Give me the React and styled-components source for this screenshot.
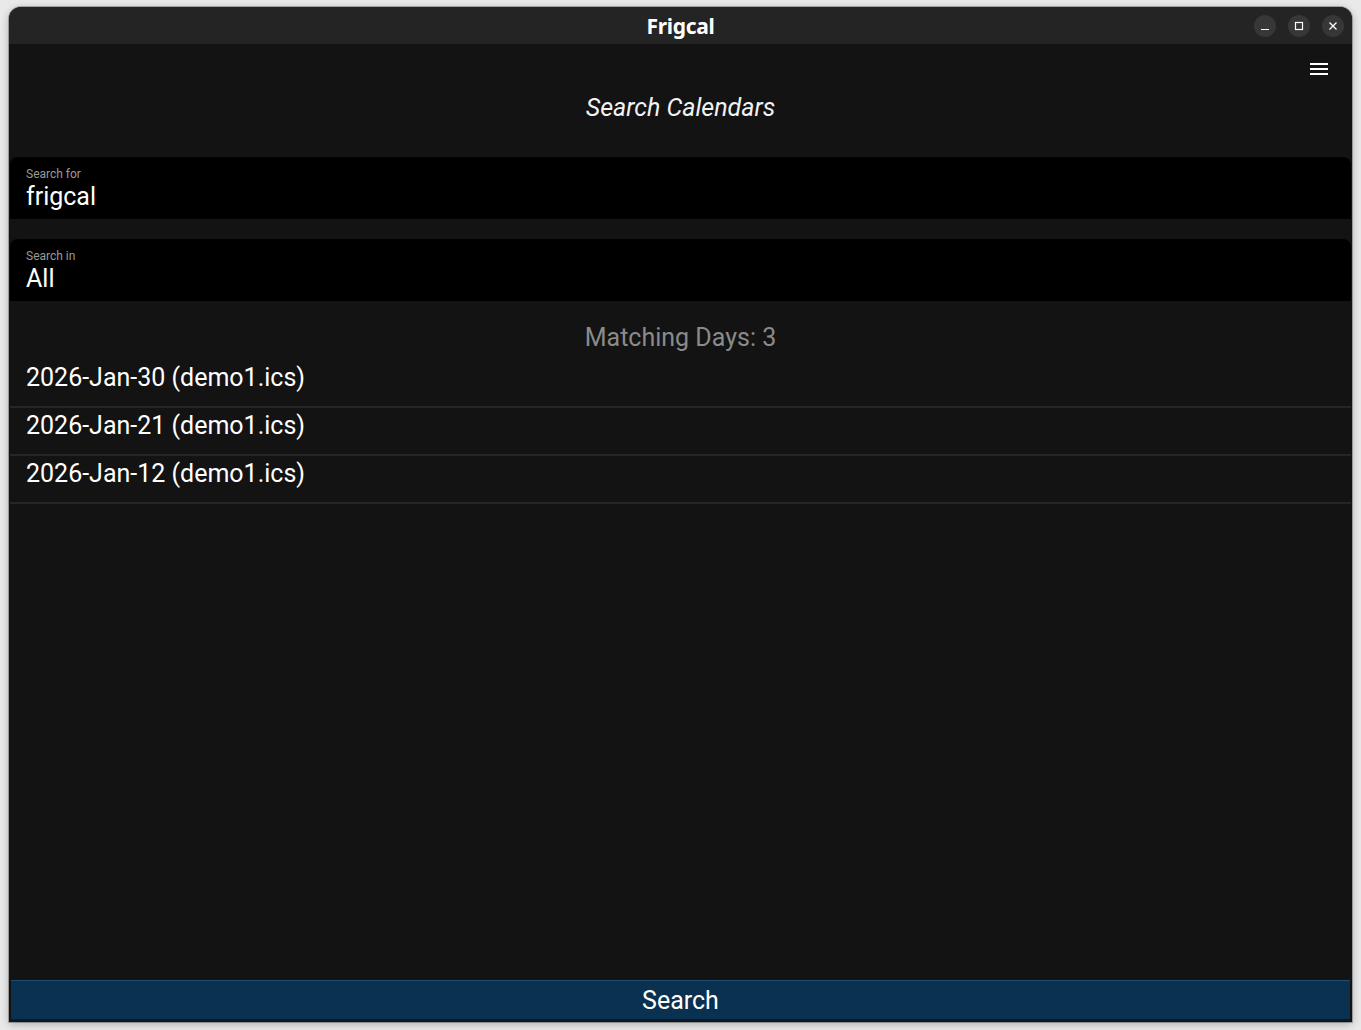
import React from "react";
import styled, { createGlobalStyle } from "styled-components";

const Global = createGlobalStyle`
  html, body { margin: 0; padding: 0; background: #e9e9e9; }
  body { width: 1361px; height: 1030px; overflow: hidden; font-family: Roboto, "Liberation Sans", sans-serif; }
`;

const Page = styled.div`
  padding: 7px 9px 0 9px;
  height: 1030px;
  box-sizing: border-box;
`;

const Window = styled.div`
  width: 1343px;
  height: 1015px;
  display: flex;
  flex-direction: column;
  border-radius: 12px 12px 0 0;
  overflow: hidden;
  background: #131313;
  box-shadow: 0 2px 8px rgba(0,0,0,0.28), 0 0 0 1px rgba(0,0,0,0.25);
`;

const TitleBar = styled.div`
  height: 37px;
  flex: none;
  background: #242424;
  display: flex;
  align-items: center;
  justify-content: center;
  position: relative;
`;

const TitleText = styled.div`
  color: #ffffff;
  font-family: "Noto Sans", "DejaVu Sans", sans-serif;
  font-weight: 700;
  font-size: 21px;
  letter-spacing: -0.3px;
`;

const WinButtons = styled.div`
  position: absolute;
  right: 8px;
  top: 8px;
  display: flex;
  gap: 12px;
`;

const WinButton = styled.div`
  width: 22px;
  height: 22px;
  border-radius: 50%;
  background: #373737;
  display: flex;
  align-items: center;
  justify-content: center;
`;

const Content = styled.div`
  flex: 1;
  display: flex;
  flex-direction: column;
  padding: 0 1px 1px 1px;
  min-height: 0;
`;

const Header = styled.div`
  height: 113px;
  flex: none;
  position: relative;
  display: flex;
  justify-content: center;
`;

const Menu = styled.div`
  position: absolute;
  right: 23px;
  top: 19px;
  width: 18px;
  display: flex;
  flex-direction: column;
  gap: 3px;
`;

const MenuLine = styled.div`
  height: 2px;
  background: #ffffff;
`;

const Heading = styled.div`
  margin-top: 50px;
  color: #f2f2f2;
  font-style: italic;
  font-size: 25px;
  line-height: 28px;
`;

const Field = styled.div`
  height: 62px;
  background: #000000;
  border-radius: 8px 8px 0 0;
  box-sizing: border-box;
  padding: 10px 16px 0 16px;
  margin-bottom: ${p => p.$gap || 0}px;
`;

const FieldLabel = styled.div`
  color: #9a9a9a;
  font-size: 12px;
  line-height: 14px;
`;

const FieldValue = styled.div`
  margin-top: 2px;
  color: #ffffff;
  font-size: 25px;
  line-height: 28px;
`;

const Count = styled.div`
  margin-top: 23px;
  text-align: center;
  color: #8a8a8a;
  font-size: 25px;
  line-height: 28px;
  margin-bottom: 8px;
`;

const Row = styled.div`
  height: 42px;
  flex: none;
  border-bottom: 2px solid #262626;
  padding: 4px 16px 0 16px;
  color: #ffffff;
  font-size: 25px;
  line-height: 28px;
`;

const Spacer = styled.div`
  flex: 1;
`;

const SearchButton = styled.button`
  height: 41px;
  flex: none;
  margin: 0 1px;
  border: none;
  border-top: 1px solid #1d4c72;
  border-bottom: 2px solid #0a1a28;
  background: #0b3150;
  color: #ffffff;
  font-family: Roboto, "Liberation Sans", sans-serif;
  font-size: 25px;
  padding: 2px 0 0 0;
  line-height: 36px;
`;

const rows = ["2026-Jan-30 (demo1.ics)", "2026-Jan-21 (demo1.ics)", "2026-Jan-12 (demo1.ics)"];

export default function App() {
  return (
    <>
      <Global />
      <Page>
        <Window>
          <TitleBar>
            <TitleText>Frigcal</TitleText>
            <WinButtons>
              <WinButton>
                <svg width="10" height="10" viewBox="0 0 10 10"><path d="M1 8.5h8" stroke="#fff" strokeWidth="1.2" /></svg>
              </WinButton>
              <WinButton>
                <svg width="10" height="10" viewBox="0 0 10 10"><rect x="1.5" y="1.5" width="7" height="7" fill="none" stroke="#fff" strokeWidth="1.2" /></svg>
              </WinButton>
              <WinButton>
                <svg width="10" height="10" viewBox="0 0 10 10"><path d="M1.5 1.5l7 7M8.5 1.5l-7 7" stroke="#fff" strokeWidth="1.3" /></svg>
              </WinButton>
            </WinButtons>
          </TitleBar>
          <Content>
            <Header>
              <Heading>Search Calendars</Heading>
              <Menu>
                <MenuLine /><MenuLine /><MenuLine />
              </Menu>
            </Header>
            <Field $gap={20}>
              <FieldLabel>Search for</FieldLabel>
              <FieldValue>frigcal</FieldValue>
            </Field>
            <Field>
              <FieldLabel>Search in</FieldLabel>
              <FieldValue>All</FieldValue>
            </Field>
            <Count>Matching Days: 3</Count>
            {rows.map((r, i) => (
              <Row key={i}>{r}</Row>
            ))}
            <Spacer />
            <SearchButton>Search</SearchButton>
          </Content>
        </Window>
      </Page>
    </>
  );
}
